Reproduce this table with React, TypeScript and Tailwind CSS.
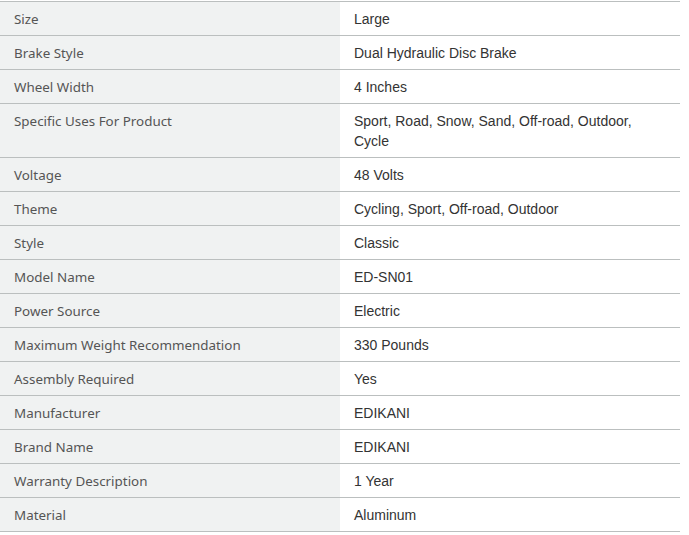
const ROWS: [string, string][] = [
  ["Size", "Large"],
  ["Brake Style", "Dual Hydraulic Disc Brake"],
  ["Wheel Width", "4 Inches"],
  ["Specific Uses For Product", "Sport, Road, Snow, Sand, Off-road, Outdoor, Cycle"],
  ["Voltage", "48 Volts"],
  ["Theme", "Cycling, Sport, Off-road, Outdoor"],
  ["Style", "Classic"],
  ["Model Name", "ED-SN01"],
  ["Power Source", "Electric"],
  ["Maximum Weight Recommendation", "330 Pounds"],
  ["Assembly Required", "Yes"],
  ["Manufacturer", "EDIKANI"],
  ["Brand Name", "EDIKANI"],
  ["Warranty Description", "1 Year"],
  ["Material", "Aluminum"],
];

export default function App() {
  return (
    <div className="w-[689px] h-[535px] bg-white pt-px">
      <table className="w-[680px] border-collapse table-fixed text-[14px] leading-5">
        <tbody>
          {ROWS.map(([label, value]) => (
            <tr key={label} className="border-y border-[#bbbfbf]">
              <td className="w-[340px] bg-[#f0f2f2] pl-[14px] pr-3 py-[6.5px] align-top text-[13.4px] text-[#555] font-['Noto_Sans',sans-serif]">
                {label}
              </td>
              <td className="pl-[14px] pr-[40px] py-[6.5px] align-top text-[#333] font-['Liberation_Sans',Arial,sans-serif]">
                {value}
              </td>
            </tr>
          ))}
        </tbody>
      </table>
    </div>
  );
}
